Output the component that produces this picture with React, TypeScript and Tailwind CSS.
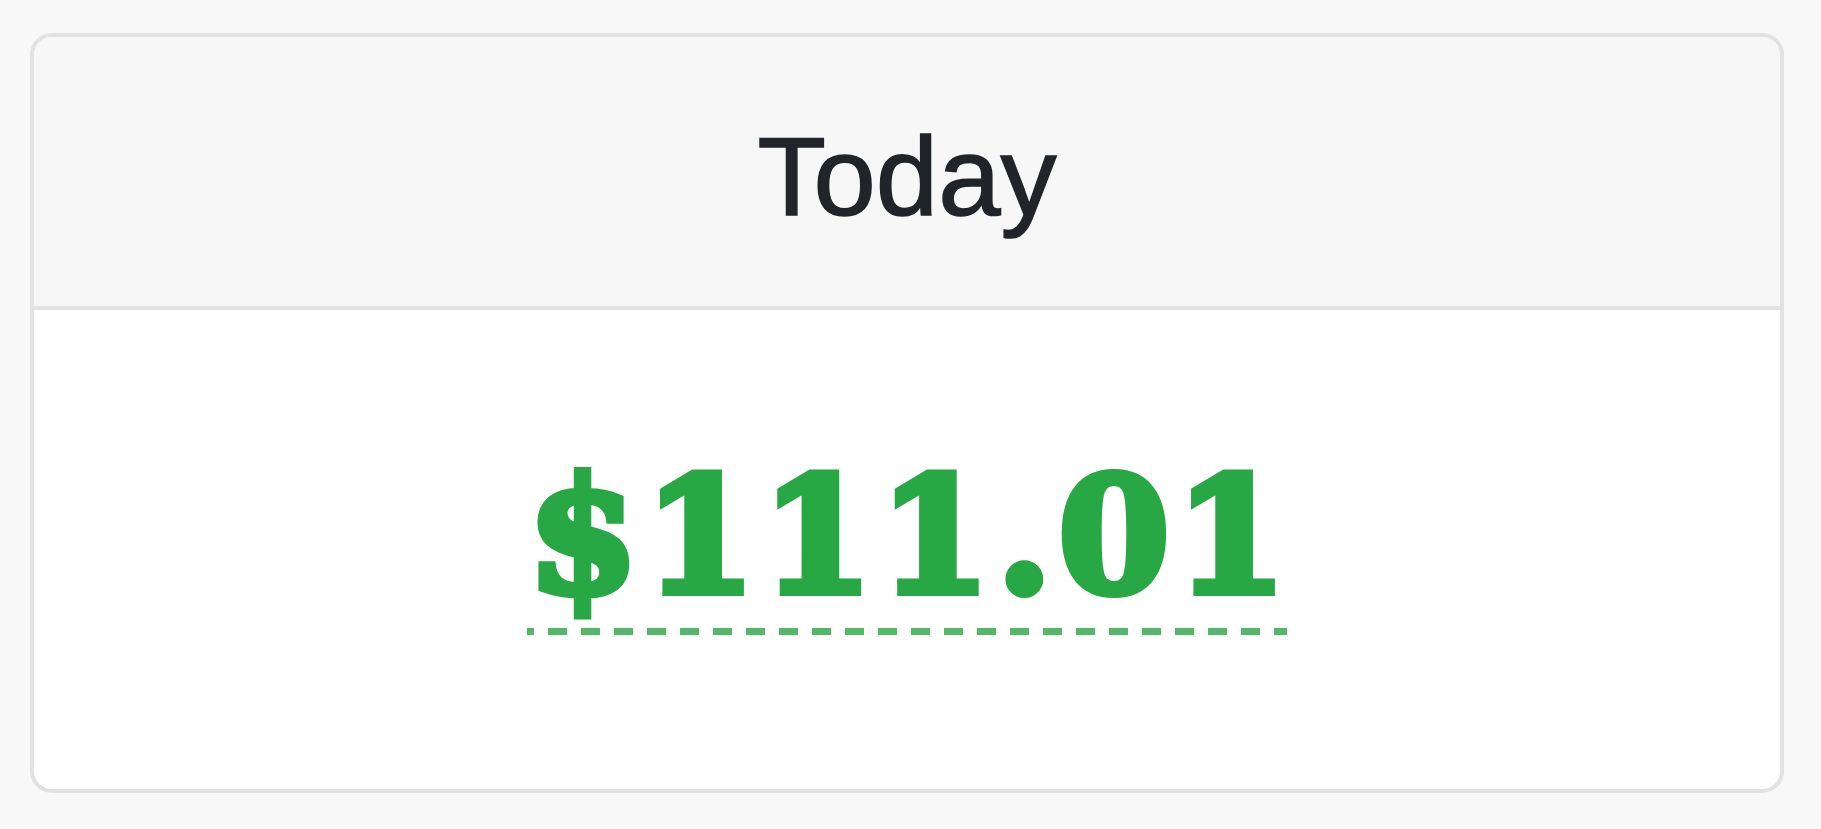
import * as React from 'react';

const Amount = ({ value }: { value: string }) => (
  <div className="inline-block" title="Earnings today">
    <div className="font-['DejaVu_Serif',serif] font-bold text-[160px] leading-none tracking-[6px] mr-[-6px] text-[#28a745] [-webkit-text-stroke:8px_#28a745] [paint-order:stroke_fill]">
      {value}
    </div>
    <div className="mt-[12px] h-[7px] w-full bg-[repeating-linear-gradient(90deg,#52b868_0_7px,transparent_7px_21px,#52b868_21px_33px)]" />
  </div>
);

export default function App() {
  return (
    <div className="min-h-screen bg-[#f8f8f8] pt-[33px] pl-[30px]">
      <div className="w-[1754px] h-[760px] bg-white border-[4px] border-[#e2e2e2] rounded-[22px] overflow-hidden flex flex-col">
        <div className="h-[273px] bg-[#f7f7f7] border-b-[4px] border-[#e2e2e2] pt-[84px] text-center">
          <div className="font-['Liberation_Sans',Arial,sans-serif] text-[112px] leading-[112px] text-[#212529] [-webkit-text-stroke:1.5px_#212529]">
            Today
          </div>
        </div>
        <div className="flex-1 pt-[146px] text-center">
          <Amount value="$111.01" />
        </div>
      </div>
    </div>
  );
}
